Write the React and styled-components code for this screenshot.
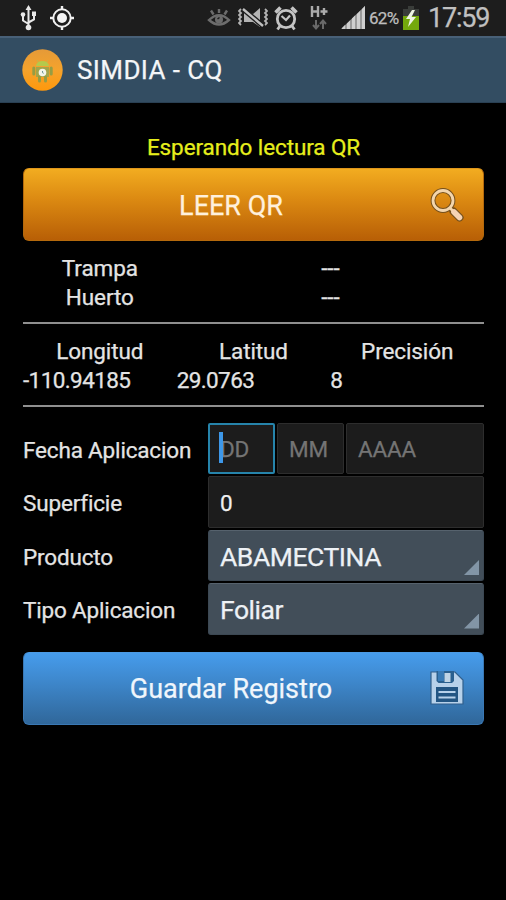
import styled, { createGlobalStyle } from "styled-components";

const GlobalStyle = createGlobalStyle`
    * {
        box-sizing: border-box;
    }
    body {
        margin: 0;
        background: #000000;
        font-family: Roboto, "Liberation Sans", sans-serif;
    }
`;

const Screen = styled.div`
    width: 506px;
    height: 900px;
    overflow: hidden;
    background: #000000;
    color: #e4e4e4;
    -webkit-text-stroke: 0.25px currentColor;
`;

const StatusBar = styled.header`
    display: flex;
    align-items: center;
    height: 36px;
    padding: 0 16px 0 20px;
    background: #1d1d1d;
    svg {
        display: block;
        flex: none;
    }
`;

const StatusLeft = styled.div`
    display: flex;
    gap: 12px;
    margin-right: auto;
`;

const StatusRight = styled.div`
    display: flex;
    align-items: center;
`;

const Gap = styled.span`
    width: ${(p) => p.$size}px;
`;

const Battery = styled.span`
    width: 31px;
    margin: 0 2px 0 3px;
    font-size: 17px;
    line-height: 36px;
    letter-spacing: -0.7px;
    color: #bebebe;
    white-space: nowrap;
`;

const Clock = styled.span`
    width: 62px;
    margin-left: 8px;
    font-size: 27px;
    line-height: 36px;
    letter-spacing: -1.2px;
    color: #c0c0c0;
    white-space: nowrap;
`;

const ActionBar = styled.div`
    display: flex;
    align-items: center;
    gap: 14px;
    height: 67px;
    padding: 0 22px 1px;
    background: #334d62;
    border-top: 2px solid #486077;
    border-bottom: 1px solid #2a4053;
    svg {
        display: block;
    }
`;

const Title = styled.h1`
    margin: 0;
    font-size: 26px;
    font-weight: 400;
    line-height: 36px;
    letter-spacing: 0.4px;
    color: #f4f6f8;
`;

const Content = styled.main`
    padding: 29px 22px 0 23px;
`;

const Message = styled.p`
    margin: 0 0 6px;
    font-size: 22.5px;
    line-height: 30px;
    letter-spacing: -0.1px;
    text-align: center;
    color: #e6ee1c;
`;

const ActionButton = styled.button`
    display: flex;
    align-items: center;
    width: 461px;
    height: 73px;
    padding: 0 19px 0 0;
    border: 1px solid ${(p) => (p.$blue ? "#3a78b4" : "#b4690c")};
    border-top-color: ${(p) => (p.$blue ? "#4b9ae4" : "#e0961a")};
    border-radius: 6px;
    background: ${(p) =>
        p.$blue
            ? "linear-gradient(#469cec, #3f8ad0 35%, #30679a)"
            : "linear-gradient(#f2ac20, #dc8a12 42%, #b85f06)"};
    font-family: inherit;
    font-size: 27px;
    line-height: 36px;
    color: ${(p) => (p.$blue ? "#f0f6fc" : "#fff0dc")};
    svg {
        display: block;
        flex: none;
    }
`;

const ButtonLabel = styled.span`
    flex: 1;
    padding: 2px 0 0 8px;
    text-align: center;
`;

const TrapTable = styled.div`
    display: grid;
    grid-template-columns: 1fr 2fr;
    grid-auto-rows: 29.5px;
    padding: 12.5px 0 9px;
    text-align: center;
`;

const LocationTable = styled.div`
    display: grid;
    grid-template-columns: repeat(3, 1fr);
    grid-auto-rows: 29.5px;
    padding: 13px 0 9px;
`;

const Cell = styled.div`
    font-size: 22.5px;
    line-height: 29.5px;
    letter-spacing: -0.1px;
    text-align: center;
    white-space: nowrap;
`;

const ValueCell = styled(Cell)`
    letter-spacing: -0.6px;
    text-align: left;
`;

const Divider = styled.div`
    height: ${(p) => p.$size}px;
    background: #8f8f8f;
`;

const Form = styled.div`
    display: grid;
    grid-template-columns: 185px 276px;
    grid-auto-rows: 51.5px;
    row-gap: 2px;
    margin: 15.5px 0 17px;
`;

const Label = styled.label`
    padding-top: 1px;
    font-size: 22.5px;
    line-height: 52px;
    letter-spacing: -0.17px;
    white-space: nowrap;
`;

const DateFields = styled.div`
    display: grid;
    grid-template-columns: 67px 67px 1fr;
    gap: 2px;
`;

const Field = styled.div`
    display: flex;
    align-items: center;
    padding: 2px 0 0 ${(p) => (p.$focused ? 9 : 11)}px;
    border: ${(p) => (p.$focused ? "2px solid #2684ab" : "1px solid #2d2d2d")};
    border-radius: 2px;
    background: #1c1c1c;
    font-size: 22.5px;
    letter-spacing: -0.2px;
    color: ${(p) => (p.$hint ? "#747474" : "#f0f0f0")};
`;

const Cursor = styled.span`
    width: 4px;
    height: 31px;
    margin: -3px -3px 0 0;
    background: #3d97e8;
    z-index: 1;
`;

const Spinner = styled.div`
    display: flex;
    align-items: center;
    justify-content: space-between;
    padding: 2px 4px 0 11px;
    border: 1px solid #3c4853;
    border-top-color: #56626d;
    border-radius: 3px;
    background: #424e59;
    font-size: 26.5px;
    letter-spacing: -0.45px;
    color: #edf1f5;
`;

const SpinnerMark = styled.span`
    align-self: flex-end;
    width: 15px;
    height: 15px;
    margin-bottom: 5px;
    background: #8295a6;
    clip-path: polygon(100% 0, 100% 100%, 0 100%);
`;

const UsbIcon = () => (
    <svg width="17" height="26" viewBox="0 0 17 26" fill="none" stroke="#e8e8e8" strokeWidth="2">
        <path d="M8.5 4v18M8.5 19L3 15.5V10M8.5 17.5l5.500-3V9" />
        <circle cx="8.5" cy="22.5" r="2.8" fill="#e8e8e8" stroke="none" />
        <circle cx="3" cy="9.5" r="2.3" fill="#e8e8e8" stroke="none" />
        <path d="M12 6.5h4v4.500h-4zM8.5 0l3 5h-6z" fill="#e8e8e8" stroke="none" />
    </svg>
);

const GpsIcon = () => (
    <svg width="26" height="26" viewBox="0 0 26 26" fill="none" stroke="#f0f0f0" strokeWidth="2">
        <circle cx="13" cy="13" r="8.7" />
        <circle cx="13" cy="13" r="5" fill="#f4f4f4" stroke="none" />
        <path d="M13 1v4M13 21v4M1 13h4M21 13h4" strokeWidth="2.4" />
    </svg>
);

const EyeIcon = () => (
    <svg width="24" height="20" viewBox="0 0 24 20" fill="none" stroke="#6c6c6c" strokeWidth="2.4">
        <path d="M2 12Q12 2.5 22 12Q12 21 2 12Z" />
        <circle cx="12" cy="11.5" r="4" fill="#6c6c6c" stroke="none" />
        <path d="M12 1v4M4 2.5l2.5 4M20 2.5l-2.5 4" />
        <path d="M10.5 11l2-1.5" stroke="#1d1d1d" strokeWidth="1.5" />
    </svg>
);

const MutedIcon = () => (
    <svg width="30" height="22" viewBox="0 0 30 22" fill="none" stroke="#b4b4b4" strokeWidth="1.8">
        <path d="M3 2L1 4l2 2-2 2 2 2-2 2 2 2-2 2 2 2M27 2l2 2-2 2 2 2-2 2 2 2-2 2 2 2-2 2" />
        <path d="M6 6h6l3 1 7-6v19l-7-5H6z" fill="#b4b4b4" stroke="none" />
        <path d="M5 2l20 17" stroke="#1d1d1d" strokeWidth="5" />
        <path d="M5 2l20 17" stroke="#c0c0c0" strokeWidth="2.4" />
    </svg>
);

const AlarmIcon = () => (
    <svg width="24" height="26" viewBox="0 0 24 26" fill="none" stroke="#c4c4c4" strokeWidth="2.8">
        <circle cx="12" cy="14" r="8.7" />
        <path d="M1.5 7.5l5-5M22.5 7.5l-5-5" strokeWidth="3.6" />
        <path d="M6 21l-2.5 3.5M18 21l2.5 3.5" />
        <path d="M7.5 11l4.5 4 4-4.5" strokeWidth="2.2" />
    </svg>
);

const HspaIcon = () => (
    <svg width="18" height="26" viewBox="0 0 18 26" fill="none">
        <path d="M2 1v11M8 1v11M2 6.5h6M10.5 6.5h7M14 3v7" stroke="#ababab" strokeWidth="2.4" />
        <path d="M6 15v8M3 20l3 3.5L9 20M13 24v-8M10 19l3-3.5 3 3.5" stroke="#696969" strokeWidth="2" />
    </svg>
);

const SignalIcon = () => (
    <svg width="25" height="24" viewBox="0 0 25 24">
        <path d="M0 23L24 0v23z" fill="#9a9a9a" />
        <path d="M1 22l3-3v4H1zM6 17.5l3-3V23H6zM11 12.5l3-3V23h-3zM16 8l3-3v18h-3zM21 3l3-3v23h-3z" fill="#cfcfcf" />
    </svg>
);

const BatteryIcon = () => (
    <svg width="18" height="26" viewBox="0 0 18 26">
        <path d="M6 1h6v3h5v8H1V4h5z" fill="#3a3d3a" />
        <path d="M1 11h16v14H1z" fill="#74a80c" />
        <path d="M10 5L4 14h4l-2 8 8-10H9.5L13 5z" fill="#eef4e4" />
    </svg>
);

const AppIcon = () => (
    <svg width="41" height="42" viewBox="0 0 41 42">
        <defs>
            <linearGradient id="appDisc" x1="0" y1="0" x2="0" y2="1">
                <stop offset="0" stopColor="#e59a38" />
                <stop offset="0.5" stopColor="#f5a32c" />
                <stop offset="1" stopColor="#ff980c" />
            </linearGradient>
        </defs>
        <ellipse cx="20.5" cy="21" rx="20.2" ry="20.8" fill="url(#appDisc)" />
        <path d="M15 11l2 3M26 11l-2 3" stroke="#c4b64a" strokeWidth="1" />
        <path d="M14 17a6.500 5 0 0 1 13 0z" fill="#b5c94b" />
        <path d="M14 18h13v10H14z" fill="#a3a54a" />
        <path d="M11.8 19v6M29.2 19v6M17.5 28v4M23.5 28v4" stroke="#969d43" strokeWidth="3" strokeLinecap="round" />
        <circle cx="20.5" cy="23.5" r="3.8" fill="#f3f4e8" />
        <path d="M20.5 22v1.700l1.200.6" stroke="#6c9290" strokeWidth="1" fill="none" />
    </svg>
);

const SearchIcon = () => (
    <svg width="34" height="34" viewBox="0 0 34 34" fill="none">
        <circle cx="13" cy="12.5" r="10" stroke="#75501c" strokeWidth="4.8" />
        <path d="M20 20l3 3" stroke="#75501c" strokeWidth="5" />
        <path d="M23.5 23.5l6 6" stroke="#75501c" strokeWidth="8" strokeLinecap="round" />
        <circle cx="13" cy="12.5" r="10" stroke="#f3d5ac" strokeWidth="2.8" />
        <path d="M20 20l4 4" stroke="#f3d5ac" strokeWidth="2.600" />
        <path d="M24 24l5.5 5.5" stroke="#f5d3b3" strokeWidth="5.6" strokeLinecap="round" />
    </svg>
);

const SaveIcon = () => (
    <svg width="34" height="34" viewBox="0 0 34 34">
        <path d="M1 1h24l8 8v24H1z" fill="#b7d1ea" stroke="#315f8b" strokeWidth="1.2" />
        <path d="M6.5 0h17.500v10l-2 2h-13.500l-2-2z" fill="#2a608f" />
        <path d="M8 0h6v10H8z" fill="#397bb6" />
        <path d="M14.5 2h6v9h-6z" fill="#bfd4e5" />
        <path d="M6 16h22v15H6z" fill="#225583" />
        <path d="M8.5 21h17M8.5 26.500h17" stroke="#b7d1ea" strokeWidth="2" />
    </svg>
);

const App = () => {
    return (
        <>
            <GlobalStyle />
            <Screen>
                <StatusBar>
                    <StatusLeft>
                        <UsbIcon />
                        <GpsIcon />
                    </StatusLeft>
                    <StatusRight>
                        <EyeIcon />
                        <Gap $size={7} />
                        <MutedIcon />
                        <Gap $size={6} />
                        <AlarmIcon />
                        <Gap $size={12} />
                        <HspaIcon />
                        <Gap $size={13} />
                        <SignalIcon />
                        <Battery>62%</Battery>
                        <BatteryIcon />
                        <Clock>17:59</Clock>
                    </StatusRight>
                </StatusBar>
                <ActionBar>
                    <AppIcon />
                    <Title>SIMDIA - CQ</Title>
                </ActionBar>
                <Content>
                    <Message>Esperando lectura QR</Message>
                    <ActionButton>
                        <ButtonLabel>LEER QR</ButtonLabel>
                        <SearchIcon />
                    </ActionButton>
                    <TrapTable>
                        <Cell>Trampa</Cell>
                        <Cell>---</Cell>
                        <Cell>Huerto</Cell>
                        <Cell>---</Cell>
                    </TrapTable>
                    <Divider $size={2} />
                    <LocationTable>
                        <Cell>Longitud</Cell>
                        <Cell>Latitud</Cell>
                        <Cell>Precisión</Cell>
                        <ValueCell>-110.94185</ValueCell>
                        <ValueCell>29.0763</ValueCell>
                        <ValueCell>8</ValueCell>
                    </LocationTable>
                    <Divider $size={2.5} />
                    <Form>
                        <Label>Fecha Aplicacion</Label>
                        <DateFields>
                            <Field $focused $hint>
                                <Cursor />
                                DD
                            </Field>
                            <Field $hint>MM</Field>
                            <Field $hint>AAAA</Field>
                        </DateFields>
                        <Label>Superficie</Label>
                        <Field>0</Field>
                        <Label>Producto</Label>
                        <Spinner>
                            ABAMECTINA
                            <SpinnerMark />
                        </Spinner>
                        <Label>Tipo Aplicacion</Label>
                        <Spinner>
                            Foliar
                            <SpinnerMark />
                        </Spinner>
                    </Form>
                    <ActionButton $blue>
                        <ButtonLabel>Guardar Registro</ButtonLabel>
                        <SaveIcon />
                    </ActionButton>
                </Content>
            </Screen>
        </>
    );
};

export default App;
